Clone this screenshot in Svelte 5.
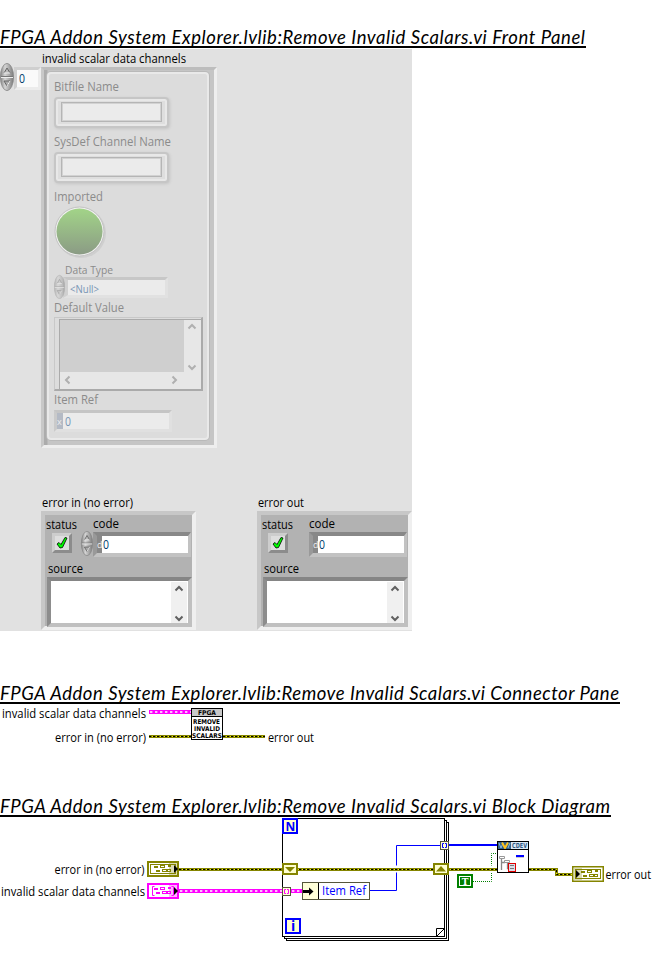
<script>
  const vi = 'FPGA Addon System Explorer.lvlib:Remove Invalid Scalars.vi';
  const clusters = [
    { title: 'error in (no error)', width: 91, control: true },
    { title: 'error out', width: 46, control: false }
  ];
  const cells = [[2, 3, 4, 3], [8, 1, 5, 4], [4, 8, 4, 3], [10, 7, 5, 4], [16, 2, 3, 3], [15, 7, 4, 4]];
</script>

{#snippet label(text, width, size = 12)}
  <svg class="label" {width} height="17"><text x="0" y="12.600" font-size={size} textLength={width} lengthAdjust="spacingAndGlyphs">{text}</text></svg>
{/snippet}

{#snippet heading(text, width)}
  <svg class="heading" width="653" height="25">
    <text x="0" y="20" textLength={width - 1} lengthAdjust="spacing">{text}</text>
    <rect x="0" y="22" {width} height="2" />
  </svg>
{/snippet}

{#snippet spinner(w, h)}
  <svg class="spinner" width={w} height={h} viewBox="0 0 14 28" preserveAspectRatio="none">
    <ellipse cx="7" cy="14" rx="6.6" ry="13.6" fill="url(#metal)" stroke="#858585" stroke-width=".8" />
    <path d="M1 13.5H13" stroke="#777" /><path d="M1 14.5H13" stroke="#eee" />
    <path d="M4 10L7 5L10 10" fill="#bbb" stroke="#666" /><path d="M4 10H10" stroke="#eee" />
    <path d="M4 18H10L7 23Z" fill="#aaa" stroke="#666" /><path d="M7 23L10 18" stroke="#eee" />
  </svg>
{/snippet}

{#snippet chevrons(h, gray)}
  <svg class="bar" width="16" height={h}>
    <path d="M4.5 8.5L8 5L11.5 8.5" fill="none" stroke={gray} stroke-width="2" />
    <path d="M4.5 {h - 6.5}L8 {h - 3}L11.5 {h - 6.5}" fill="none" stroke={gray} stroke-width="2" />
  </svg>
{/snippet}

{#snippet errWire(d)}
  <path {d} fill="none" stroke="#858500" stroke-width="3" />
  <path {d} fill="none" stroke="#f0f000" stroke-width="1" />
  <path {d} fill="none" stroke="#000" stroke-width="1" stroke-dasharray="2.5 1.5" />
{/snippet}

{#snippet pinkWire(x, y, w)}
  <rect {x} {y} width={w} height="4" fill="#f0f" />
  <path d="M{x + 1} {y + 2}H{x + w}" stroke="#fff" stroke-width="1.600" stroke-dasharray="2.400 2.600" />
{/snippet}

{#snippet terminal(x, y, color, kind)}
  <g transform="translate({x} {y})">
    <rect x="1" y="1" width="30" height="14" fill="#fff" stroke={color} stroke-width={kind === 'out' ? 1 : 2} />
    {#if kind === 'out'}<rect x=".5" y=".5" width="31" height="15" fill="none" stroke={color} />{/if}
    {#if kind === 'array'}
      <path d="M7.5 3.5H5.5V12.5H7.5M24.5 3.5H26.5V12.5H24.5" fill="none" stroke={color} />
    {:else}
      <rect x="3.5" y="3.5" width="25" height="9" fill="none" stroke={color} />
    {/if}
    <g transform="translate({kind === 'out' ? 7 : 5} 2)">
      {#each cells as [cx, cy, w, h], i}
        <rect x={cx + 0.5} y={Math.round(cy / 1.35) + 1.5} width={w - 1} height={h - 2} fill={i % 2 ? 'none' : color} stroke={color} />
      {/each}
    </g>
    <rect x={kind === 'out' ? 2 : 22} y="2" width="8" height="12" fill={color} opacity=".3" />
    {#if kind === 'out'}
      <path d="M4 4L8 8L4 12Z" />
    {:else}
      <path d="M27 4L31 8L27 12Z" />
    {/if}
  </g>
{/snippet}

<svg class="defs" width="0" height="0">
  <defs>
    <linearGradient id="metal"><stop offset="0" stop-color="#858585" /><stop offset=".35" stop-color="#d4d4d4" /><stop offset="1" stop-color="#7b7b7b" /></linearGradient>
    <linearGradient id="led" x2="0" y2="1"><stop offset="0" stop-color="#a2d488" /><stop offset="1" stop-color="#8b9b85" /></linearGradient>
  </defs>
</svg>

<main>
  <div class="first">{@render heading(`${vi} Front Panel`, 586)}</div>
  <section class="panel">
    <div class="title">{@render label('invalid scalar data channels', 144)}</div>
    <div class="array">
      <div class="index">{@render spinner(14, 28)}<div class="indexbox">{@render label('0', 6)}</div></div>
      <div class="frame">
        <div class="cluster">
          <div class="cap">{@render label('Bitfile Name', 65)}</div>
          <div class="string"><div></div></div>
          <div class="cap">{@render label('SysDef Channel Name', 117)}</div>
          <div class="string"><div></div></div>
          <div class="cap">{@render label('Imported', 49)}</div>
          <svg class="lamp" width="56" height="56">
            <circle cx="27" cy="29" r="25" fill="#cfcfcf" />
            <circle cx="25.5" cy="27.5" r="24.5" fill="#f0f0f0" stroke="#c2c2c2" />
            <circle cx="25.5" cy="27.5" r="23" fill="url(#led)" />
          </svg>
          <div class="cap small">{@render label('Data Type', 48, 11)}</div>
          <div class="ring">{@render spinner(11, 24)}<div class="ringbox">{@render label('<Null>', 29, 10.5)}</div></div>
          <div class="cap">{@render label('Default Value', 70)}</div>
          <div class="variant">
            <div class="view"><div class="gray"></div>{@render chevrons(52, '#b0b0b0')}</div>
            <svg class="hbar" width="140" height="18">
              <path d="M9.5 5.5L6 9L9.5 12.5M112.500 5.500L116 9L112.500 12.500" fill="none" stroke="#b0b0b0" stroke-width="2" />
            </svg>
          </div>
          <div class="cap">{@render label('Item Ref', 44)}</div>
          <div class="ref"><span>x</span><div>{@render label('0', 6)}</div></div>
        </div>
      </div>
    </div>
    <div class="errors">
      {#each clusters as c}
        <div class="error">
          <div class="etitle">{@render label(c.title, c.width)}</div>
          <div class="ebox">
            <div class="caps"><div class="status">{@render label('status', 31)}</div>{@render label('code', 26)}</div>
            <div class="fields">
              <div class="check">
                <svg width="14" height="14"><path d="M2 8L4 6.500L6 8.500L10 1.500L12 2L7.500 11.500L5 12Z" fill="#0f0" stroke="#000" stroke-width=".8" /></svg>
              </div>
              <div class="slot">{#if c.control}{@render spinner(12, 25)}{/if}</div>
              <div class="code"><span>d</span><div>{@render label('0', 6)}</div></div>
            </div>
            <div class="source">{@render label('source', 35)}</div>
            <div class="text">{@render chevrons(41, '#606060')}</div>
          </div>
        </div>
      {/each}
    </div>
  </section>

  <div class="second">{@render heading(`${vi} Connector Pane`, 620)}</div>
  <svg class="pane" width="653" height="88" viewBox="0 705 653 88">
    <text x="2" y="717.500" textLength="144" lengthAdjust="spacingAndGlyphs">invalid scalar data channels</text>
    <text x="55" y="741.500" textLength="91" lengthAdjust="spacingAndGlyphs">error in (no error)</text>
    <text x="268" y="741.500" textLength="46" lengthAdjust="spacingAndGlyphs">error out</text>
    {@render pinkWire(149, 710, 42)}
    {@render errWire('M149 736.5H191')}
    {@render errWire('M223 736.5H265')}
    <rect x="191.500" y="708.500" width="31" height="31" fill="#fff" stroke="#000" />
    <rect x="192" y="709" width="30" height="7" fill="#c8c8c8" /><path d="M192 716.5H222" stroke="#000" />
    <g class="pixel">
      <text x="198" y="715" textLength="18" lengthAdjust="spacingAndGlyphs">FPGA</text>
      <text x="193" y="724" textLength="27" lengthAdjust="spacingAndGlyphs">REMOVE</text>
      <text x="194" y="731" textLength="26" lengthAdjust="spacingAndGlyphs">INVALID</text>
      <text x="192" y="738" textLength="30" lengthAdjust="spacingAndGlyphs">SCALARS</text>
    </g>
  </svg>

  {@render heading(`${vi} Block Diagram`, 611)}
  <svg class="diagram" width="653" height="148" viewBox="0 818 653 148">
    <g fill="#fff" stroke="#000">
      <rect x="286.500" y="822.500" width="162" height="118" />
      <rect x="284.500" y="820.500" width="162" height="118" />
      <rect x="282.500" y="818.500" width="162" height="118" />
      <path d="M436.500 936V928.500H444M436.500 936.500L444.500 928.500" />
    </g>
    <path d="M370 890.500H396.500V845.500H440" fill="none" stroke="#00f" />
    <path d="M449 845H497" stroke="#00f" stroke-width="2" />
    <path d="M473 881.500H491.500V853.500H497" fill="none" stroke="#008000" stroke-dasharray="1 1" />
    <path d="M394 869H399M489 869H494" stroke="#fff" stroke-width="7" />
    {@render errWire('M179 869.5H497')}
    {@render errWire('M529 869.5H556.5V874.5H572')}
    {@render pinkWire(179, 889, 103)}
    {@render pinkWire(291, 889, 12)}

    <text x="54.500" y="873.500" textLength="90" lengthAdjust="spacingAndGlyphs">error in (no error)</text>
    <text x="1" y="895.500" textLength="144" lengthAdjust="spacingAndGlyphs">invalid scalar data channels</text>
    <text x="605.500" y="878.500" textLength="45.500" lengthAdjust="spacingAndGlyphs">error out</text>
    {@render terminal(147, 861, '#858500', 'in')}
    {@render terminal(147, 883, '#f0f', 'array')}
    {@render terminal(572, 866, '#858500', 'out')}

    <g fill="#ffffd0" stroke="#00f" stroke-width="2">
      <rect x="283" y="819" width="14" height="14" /><rect x="286" y="919" width="14" height="14" />
    </g>
    <text x="285.500" y="830.500" class="blue bold">N</text>
    <text x="291" y="931" class="blue bold i">i</text>
    <g fill="#ffffd0" stroke="#858500" stroke-width="2">
      <rect x="283" y="864" width="14" height="10" /><rect x="434" y="864" width="14" height="10" />
    </g>
    <path d="M285 867H295L290 872ZM436 871.500H446L441 866Z" fill="#858500" />
    <g fill="#ffffd8" stroke="#55553a">
      <rect x="282.500" y="887.500" width="8" height="8" /><rect x="440.500" y="841.500" width="8" height="8" />
      <rect x="302.500" y="882.500" width="67" height="17" />
    </g>
    <path d="M286 889.500H284.500V893.500H286M287 889.500H288.500V893.500H287" fill="none" stroke="#f0f" />
    <path d="M444 843.500H442.500V847.500H444M445 843.500H446.500V847.500H445" fill="none" stroke="#00f" />
    <rect x="319" y="883" width="50" height="16" fill="#fff" /><path d="M318.500 883V899" stroke="#000" />
    <path d="M303 890H309V887.500L313.500 891.500L309 895.500V893H303Z" />
    <text x="322" y="895" class="blue" textLength="44" lengthAdjust="spacingAndGlyphs">Item Ref</text>

    <rect x="458" y="875" width="14" height="12" fill="#fff" stroke="#008000" stroke-width="2" />
    <rect x="460" y="877" width="10" height="8" fill="#008000" />
    <text x="465" y="884.500" class="tee">T</text>

    <rect x="497.500" y="841.500" width="31" height="31" fill="#fff" stroke="#000" />
    <rect x="498" y="842" width="13" height="7" fill="#315f8b" />
    <path d="M499 843L501 848L503 843" fill="none" stroke="#8cb9d7" />
    <path d="M502 842.500L505 848L508 842.500" fill="none" stroke="#ffc21c" stroke-width="2" />
    <path d="M508 848L510 843" stroke="#8cb9d7" />
    <rect x="511" y="842" width="17" height="7" fill="#dceaf5" /><path d="M498 849.500H528" stroke="#000" />
    <text x="512" y="848" class="cdev" textLength="15" lengthAdjust="spacingAndGlyphs">CDEV</text>
    <rect x="516" y="855" width="8" height="2" fill="#00f" /><path d="M516 857.500H524" stroke="#ccc" />
    <path d="M501.500 858V870M501.500 862.500H505M507.500 863V868.500H510" fill="none" stroke="#888" stroke-width="1.300" />
    <path d="M499.500 856.500H504.500V858.500H499.500ZM504.500 860.500H509.500V862.500H504.500Z" fill="#fff" stroke="#999" />
    <rect x="508.500" y="863.500" width="7" height="8" fill="#d8dce8" stroke="#e00000" />
    <path d="M510 865.500H514M510 868.500H514" stroke="#777" />
  </svg>
</main>

<style>
  :global(body) { margin: 0; background: #fff; }
  main { width: 653px; height: 966px; overflow: hidden; font-family: "Open Sans", "Noto Sans", sans-serif; font-size: 12px; }
  main *, main { box-sizing: border-box; }
  svg { display: block; flex: none; overflow: visible; }
  .defs { position: absolute; }
  .heading text { font-family: Lato, sans-serif; font-style: italic; font-size: 18.5px; }
  .first { padding-top: 24px; }
  .panel { width: 412px; height: 582px; background: #e1e1e1; }
  .title { height: 18px; padding: 1px 0 0 42px; }
  .array { display: flex; height: 382px; }
  .index { display: flex; width: 41px; align-items: flex-start; }
  .index > .spinner { margin-top: -4px; }
  .indexbox { width: 27px; height: 23px; background: #fafafa; border: 3px solid; border-color: #cfcfcf #ececec #ececec #cfcfcf; padding-left: 2px; }
  .frame { width: 176px; height: 381px; border: 3px solid; border-color: #bdbdbd #eee #eee #c8c8c8; background: linear-gradient(90deg, #acacac 3px, #c5c5c5 4px); padding: 2px 0 0 3px; }
  .cluster { width: 162px; height: 368px; border: 2px solid #e9e9e9; border-radius: 4px; background: #dcdcdc; box-shadow: 0 0 0 1px #b9b9b9; padding: 4px 0 0 5px; }
  .cap { height: 19px; }
  .cluster :global(text) { fill: #8b8b8b; }
  .string { width: 115px; height: 31px; border: 2px solid #c6c6c6; border-radius: 4px; box-shadow: inset 0 0 0 2px #e8e8e8, 1px 1px 3px #c4c4c4; padding: 3px 5px; margin-bottom: 5px; background: #dedede; }
  .string div { height: 20px; border: 1px solid #b5b5b5; box-shadow: inset 0 0 0 1px #d2d2d2; background: #ebebeb; }
  .lamp { margin-top: -3px; height: 56px; }
  .cap.small { height: 14px; padding-left: 11px; margin-top: 1px; }
  .ring { display: flex; height: 24px; }
  .ring .spinner { opacity: .45; }
  .ringbox { width: 105px; height: 21px; margin: 2px 0 0 -2px; border: 3px solid; border-width: 3px 3px 3px 5px; border-color: #c7c7c7 #e1e1e1 #e1e1e1 #d0d0d0; background: #ebebeb; padding-left: 2px; }
  .ringbox :global(text) { fill: #7895b5; }
  .variant { width: 149px; height: 74px; border: 1px solid #c8c8c8; border-right: 2px solid #aaa; border-bottom: 2px solid #aaa; padding: 1px 0 0 4px; margin-top: -1px; }
  .view { display: flex; width: 142px; height: 52px; border-left: 1px solid #aaa; border-top: 1px solid #aaa; background: #e7e7e7; }
  .gray { width: 124px; height: 52px; background: #cfcfcf; }
  .hbar { background: #e7e7e7; border-left: 1px solid #aaa; width: 142px; }
  .ref { display: flex; width: 118px; height: 22px; border: 3px solid; border-color: #c5c5c5 #e0e0e0 #e0e0e0 #cacaca; background: #ebebeb; }
  .ref span { width: 6px; background: #b4bac5; color: #eee; font-size: 9px; line-height: 17px; }
  .ref div { padding-left: 2px; }
  .ref :global(text) { fill: #7895b5; }
  .errors { display: flex; gap: 61px; padding: 44px 0 0 41px; }
  .error { width: 155px; }
  .etitle { height: 18px; padding: 1px 0 0 1px; }
  .ebox { height: 119px; border: 4px solid; border-color: #c7c7c7 #efefef #efefef #c7c7c7; background: #b2b2b2; }
  .caps { display: flex; height: 17px; padding-left: 1px; }
  .status { width: 47px; padding-top: 1px; }
  .fields { display: flex; height: 28px; padding-left: 7px; }
  .check { width: 20px; height: 20px; margin-top: 1px; border: 3px solid; border-color: #cdcdcd #8c8c8c #8c8c8c #cdcdcd; background: #dedede; }
  .slot { width: 21px; padding-left: 9px; margin-top: -1px; }
  .code { display: flex; width: 98px; height: 25px; border: 4px solid; border-width: 4px 3px 4px 4px; border-color: #888 #c2c2c2 #c2c2c2 #999; background: #fff; }
  .code span { width: 5px; background: #888; color: #eee; font-size: 9px; line-height: 18px; }
  .code div { padding-left: 1px; }
  .code :global(text), .indexbox :global(text) { fill: #003d6d; }
  .source { height: 17px; padding-left: 3px; }
  .text { display: flex; justify-content: flex-end; width: 145px; height: 50px; margin-left: 2px; border: 4px solid; border-color: #858585 #c0c0c0 #c0c0c0 #8d8d8d; background: #fff; padding: 1px 1px 0 0; }
  .bar { background: #f0f0f0; }
  .variant .bar { background: #e7e7e7; }
  .second { padding-top: 49px; }
  .blue { fill: #00f; }
  .bold { font-weight: 700; font-size: 12px; }
  .i { font-size: 14px; }
  .pixel text { font-family: "DejaVu Sans", sans-serif; font-size: 6.5px; font-weight: 700; }
  .tee { fill: #fff; font-family: "DejaVu Serif", serif; font-size: 9px; font-weight: 700; text-anchor: middle; }
  .cdev { fill: #305b85; font-family: "DejaVu Sans", sans-serif; font-size: 7px; font-weight: 700; }
</style>
